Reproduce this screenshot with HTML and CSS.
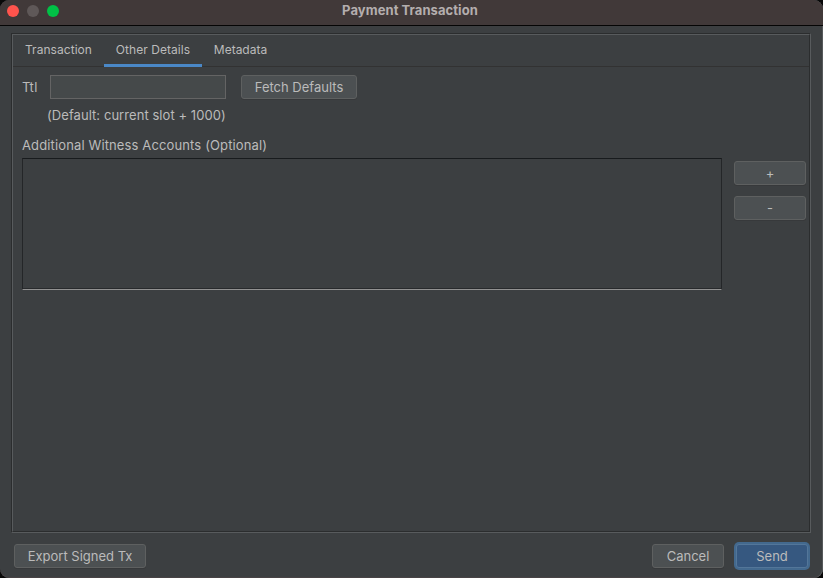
FILE: index.html
```html
<!DOCTYPE html>
<html lang="en">
<head>
<meta charset="utf-8">
<title>Payment Transaction</title>
<link rel="stylesheet" href="styles.css">
</head>
<body>
<div class="window">
  <header class="titlebar">
    <div class="lights"><i class="light red"></i><i class="light gray"></i><i class="light green"></i></div>
    <h1>Payment Transaction</h1>
  </header>
  <main class="frame">
    <section class="frame-inner">
      <nav class="tabs">
        <span class="tab tab-transaction">Transaction</span>
        <span class="tab tab-details active">Other Details</span>
        <span class="tab tab-metadata">Metadata</span>
      </nav>
      <div class="panel">
        <div class="ttl-row">
          <label for="ttl">Ttl</label>
          <input id="ttl" type="text">
          <button class="button fetch">Fetch Defaults</button>
        </div>
        <p class="hint">(Default: current slot + 1000)</p>
        <p class="heading">Additional Witness Accounts (Optional)</p>
        <div class="accounts">
          <div class="list"></div>
          <div class="side">
            <button class="button">+</button>
            <button class="button">-</button>
          </div>
        </div>
      </div>
    </section>
  </main>
  <footer class="footer">
    <button class="button export">Export Signed Tx</button>
    <button class="button cancel">Cancel</button>
    <button class="button send">Send</button>
  </footer>
</div>
</body>
</html>
```
FILE: styles.css
```css
* { box-sizing: border-box; }
body {
  margin: 0;
  background: #080808;
  color: #bbbbbb;
  font: 13px/16px Inter, "Liberation Sans", sans-serif;
}
.window {
  width: 823px;
  height: 578px;
  display: flex;
  flex-direction: column;
  background: #3c3f41;
  border-radius: 9px;
  overflow: hidden;
  box-shadow: inset -1px 0 #55585a, inset 0 -1px #484345;
}
.titlebar {
  height: 26px;
  flex: none;
  display: grid;
  grid-template-columns: 60px 1fr 63px;
  background: #413939;
  border-bottom: 1px solid #050505;
}
.lights { display: flex; gap: 8px; padding: 5px 0 0 7px; }
.light { width: 12px; height: 12px; flex: none; border-radius: 50%; }
.red { background: #ff544d; }
.gray { background: #5f5858; }
.green { background: #00c146; }
h1 {
  margin: 0;
  padding-top: 2px;
  text-align: center;
  font-size: 13px;
  line-height: 16px;
  font-weight: 700;
  letter-spacing: 0.07px;
  color: #b4aeae;
}
.frame {
  width: 800px;
  height: 500px;
  flex: none;
  margin: 7px 0 0 11px;
  border: 1px solid #2b2d2e;
  border-right-color: #585b5d;
  border-bottom-color: #585b5d;
}
.frame-inner {
  height: 100%;
  border: 1px solid #585b5d;
  border-right-color: #2b2d2e;
  border-bottom-color: #2b2d2e;
}
.tabs {
  display: flex;
  height: 32px;
  border-bottom: 1px solid #323232;
  font-size: 12px;
}
.tab { height: 32px; padding-top: 7px; text-align: center; white-space: nowrap; }
.tab-transaction { width: 91px; letter-spacing: 0.05px; }
.tab-details { width: 98px; letter-spacing: 0.05px; }
.tab-metadata { width: 77px; }
.active { border-bottom: 3px solid #4a88c7; }
.panel { padding: 8px 3px 0 9px; }
.ttl-row { display: flex; height: 24px; align-items: center; }
.ttl-row label { width: 28px; letter-spacing: 0.5px; }
input {
  width: 176px;
  height: 24px;
  margin: 0 15px 0 0;
  padding: 2px 5px;
  color: #bbbbbb;
  font: inherit;
  background: #45494a;
  border: 1px solid #646464;
  outline: none;
}
.button {
  width: 72px;
  height: 24px;
  flex: none;
  padding: 0;
  color: #bbbbbb;
  font: inherit;
  letter-spacing: inherit;
  background: #4c5052;
  border: 1px solid #5e6060;
  border-radius: 3px;
  box-shadow: 0 1px #37393b;
}
.fetch { width: 116px; }
p { margin: 0; white-space: nowrap; }
.hint { padding: 8px 0 0 25px; letter-spacing: 0.06px; }
.heading { padding-top: 14px; letter-spacing: 0.13px; }
.accounts { display: flex; margin-top: 5px; }
.list {
  width: 700px;
  height: 132px;
  border: 1px solid #242628;
  border-top-color: #181b1d;
  border-bottom-color: #929292;
  background: linear-gradient(#282a2c, #282a2c) bottom / 100% 1px no-repeat padding-box;
}
.side { display: flex; flex-direction: column; gap: 11px; padding: 3px 0 0 12px; }
.footer { display: flex; align-items: center; padding: 0 15px 0 14px; height: 24px; margin-top: 11px; }
.export { width: 132px; }
.cancel { margin-left: auto; }
.send {
  width: 72px;
  margin-left: 12px;
  background: #365880;
  border-color: #537699;
  box-shadow: 0 0 0 2px #43698e;
}
```
